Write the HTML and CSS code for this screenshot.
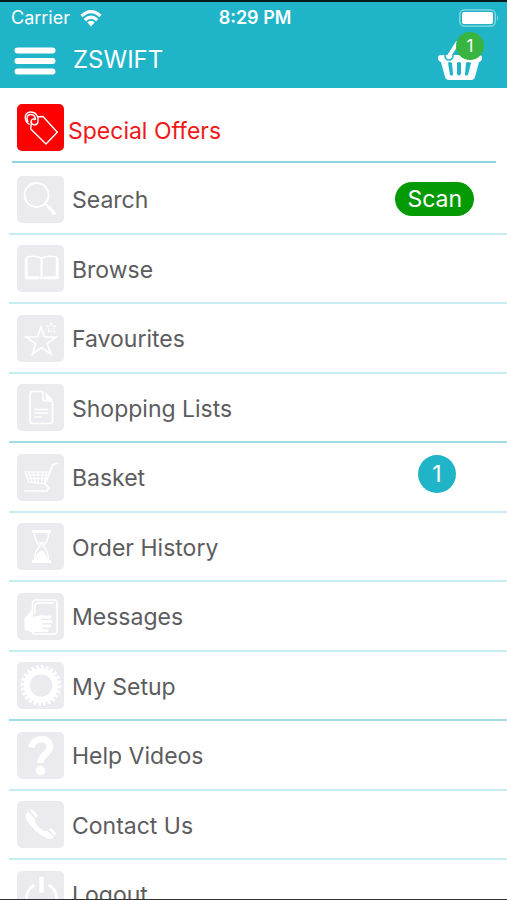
FILE: index.html
```html
<!DOCTYPE html>
<html lang="en">
<head>
<meta charset="utf-8">
<meta name="viewport" content="width=device-width, initial-scale=1">
<title>ZSWIFT</title>
<link rel="stylesheet" href="styles.css">
</head>
<body>
<div class="app">
  <header class="header">
    <div class="status">
      <div class="carrier">
        <span>Carrier</span>
        <svg width="22" height="17" viewBox="0 0 22 17" fill="none" stroke="#fff" stroke-width="3.200"><path d="M1.500 6Q11-2.800 20.500 6M4.800 10Q11 4.500 17.200 10"/><path d="M7.200 12.300Q11 9 14.800 12.300L11 16.500Z" fill="#fff" stroke="none"/></svg>
      </div>
      <span class="time">8:29 PM</span>
      <svg class="battery" width="40" height="18" viewBox="0 0 40 18"><rect x=".8" y=".8" width="35.500" height="16.400" rx="4.500" fill="none" stroke="#8fdbe5" stroke-width="1.300"/><rect x="3" y="3" width="31" height="12" rx="2" fill="#fff"/><path d="M38 6q2 3 0 6z" fill="#8fdbe5"/></svg>
    </div>
    <div class="bar">
      <button class="plain" type="button" aria-label="Menu">
        <svg width="42" height="28" viewBox="0 0 42 28" stroke="#fff" stroke-width="6" stroke-linecap="round"><path d="M3.500 3.500h35M3.500 14h35M3.500 24.500h35"/></svg>
      </button>
      <h1 class="title">ZSWIFT</h1>
      <button class="plain basket" type="button" aria-label="Basket">
        <svg width="46" height="40" viewBox="0 0 46 40"><path d="M12 15L21 1" stroke="#fff" stroke-width="4" stroke-linecap="round"/><path fill="#fff" fill-rule="evenodd" d="M4 14H42Q45 14 45 17T42 21L38 36Q37 39 34 39H12Q9 39 8 36L4 21Q1 20 1 17T4 14ZM11 22L13 34Q16 36 16 33L15 22Q13 20 11 22ZM20 22V33Q22 36 24 33V22Q22 20 20 22ZM29 22L28 33Q28 36 31 34L34 22Q31 20 29 22Z"/><path d="M8 14Q8 19 12 19T16 14" fill="#fff" stroke="#20b4c8" stroke-width="1.500"/></svg>
        <span class="count">1</span>
      </button>
    </div>
  </header>

  <nav class="menu">
    <a class="offers" href="#offers">
      <svg class="icon" viewBox="0 0 47 47" fill="none" stroke="#fff" stroke-width="1.400" stroke-linejoin="round"><path d="M20 13L26 12.500L40.300 28.300L29 40L13.700 25L14.500 17.500"/><path d="M12.500 20.500C7 17 6.500 9 13 8C19 7.500 22 13 21 18C20 22 14.500 21.500 14 18C14 15 17 14 18.500 16M11 18C9 14 10 10.500 13.500 10.500C17 10.500 18.500 13 18.500 16"/></svg>
      <span>Special Offers</span>
    </a>
    <div class="row">
      <a class="link" href="#search">
        <svg class="icon" viewBox="0 0 47 47" fill="none" stroke="#fff"><circle cx="19.500" cy="19" r="12" stroke-width="1.800"/><path d="M28 28L31 30" stroke-width="2"/><path d="M31 30L38 38.500" stroke-width="3.500"/></svg>
        <span>Search</span>
      </a>
      <button class="scan" type="button">Scan</button>
    </div>
    <div class="row">
      <a class="link" href="#browse">
        <svg class="icon" viewBox="0 0 47 47" fill="none" stroke="#fff" stroke-width="1.400" stroke-linejoin="round"><path d="M24.500 13Q18 10 10 12V32H22Q24.500 35 27 32H39.500V12Q31 10 24.500 13ZM8.500 13V33.500H22M41 13V33.500H27"/><path d="M24.500 13V34" stroke-width="2"/></svg>
        <span>Browse</span>
      </a>
    </div>
    <div class="row">
      <a class="link" href="#favourites">
        <svg class="icon" viewBox="0 0 47 47" fill="none" stroke="#fff" stroke-width="1.700"><path d="M24 12L27.500 22H39L30 28.500L34 39L24.500 32.500L15.500 39L18.500 28.500L9 22H20.500Z"/><path stroke-width="1" d="M34 7.500L35.500 11L39 11L36.500 13.500L38 17.500L34 15.500L31 17.500L32 13.500L29.500 11L33 11Z"/></svg>
        <span>Favourites</span>
      </a>
    </div>
    <div class="row">
      <a class="link" href="#lists">
        <svg class="icon" viewBox="0 0 47 47" fill="none" stroke="#fff" stroke-width="1.700" stroke-linejoin="round"><path d="M26 7.500H16Q13 7.500 13 10.500V36.500Q13 39.500 16 39.500H32.500Q35.500 39.500 35.500 36.500V17M17 25.500H31.500M17 29H31.500M17 33H25"/><path d="M26 7.500V14Q26 17 29 17H35.500"/><path fill="#fff" stroke="none" d="M28.500 8L36 16H30Q28.500 16 28.500 14Z"/></svg>
        <span>Shopping Lists</span>
      </a>
    </div>
    <div class="row">
      <a class="link" href="#basket">
        <svg class="icon" viewBox="0 0 47 47" fill="none" stroke="#fff" stroke-width="1.700" stroke-linecap="round"><path d="M40 9.500L36 10.500L28 29.500L32 34L30 37H8"/><path stroke-width="1.200" d="M33 18H8L12 28L28 30M9 21H32M10 24.500H31M12 18L15 28M16.500 18L18 28M21 18V28.500M25.500 18L24.500 29M29.500 18L27.500 29"/></svg>
        <span>Basket</span>
      </a>
      <span class="badge">1</span>
    </div>
    <div class="row">
      <a class="link" href="#history">
        <svg class="icon" viewBox="0 0 47 47" fill="none" stroke="#fff"><path stroke-width="2.800" d="M15 8.500H34M15 38.500H34"/><path stroke-width="1.300" d="M17.500 10Q17.500 18 23 23Q17.500 28 17.500 37M31.500 10Q31.500 18 26 23Q31.500 28 31.500 37"/><path fill="#fff" stroke="none" d="M18 37Q19 31 24.500 27Q30 31 31 37ZM22 19H27L24.500 23Z"/></svg>
        <span>Order History</span>
      </a>
    </div>
    <div class="row">
      <a class="link" href="#messages">
        <svg class="icon" viewBox="0 0 47 47" fill="none" stroke="#fff" stroke-linecap="round"><path stroke-width="1.600" d="M15.500 22V10Q15.500 7 18.500 7H37Q40 7 40 10V38Q40 41 37 41H18Q15.500 41 15.500 39M18 20V12Q18 10 20 10H36"/><path fill="#fff" stroke="none" d="M16 17V24L25 22V39H14L7.500 37V25Q12 21 14.500 17Z"/><path stroke-width="3" d="M23 24H33M23 28.500H34M23 33H33M23 37.500H30"/></svg>
        <span>Messages</span>
      </a>
    </div>
    <div class="row">
      <a class="link" href="#setup">
        <svg class="icon" viewBox="0 0 47 47" fill="none" stroke="#fff"><circle cx="24" cy="23.500" r="14.200" stroke-width="6"/><circle cx="24" cy="23.500" r="18.400" stroke-width="4" pathLength="96" stroke-dasharray="2.300 1.700"/></svg>
        <span>My Setup</span>
      </a>
    </div>
    <div class="row">
      <a class="link" href="#help">
        <svg class="icon" viewBox="0 0 47 47" fill="none" stroke="#fff"><path stroke-width="6.500" d="M14.500 15.500C16 4.500 33 5 33 14.500C33 22 23.500 22 23.500 31"/><circle cx="23.500" cy="38.500" r="4.800" fill="#fff" stroke="none"/></svg>
        <span>Help Videos</span>
      </a>
    </div>
    <div class="row">
      <a class="link" href="#contact">
        <svg class="icon" viewBox="0 0 47 47" fill="#fff"><path d="M9 13Q8 18 13 24Q21 34 32 38Q35 39 37 36L30 29.500Q28 31 25 29Q20 25 18 21Q17 19 18 18L11 10.500ZM12.500 9L15 8L21 14.500L19.500 17ZM32 28.500L34 27L39 32L38 35Z"/></svg>
        <span>Contact Us</span>
      </a>
    </div>
    <div class="row">
      <a class="link" href="#logout">
        <svg class="icon" viewBox="0 0 47 47" fill="none" stroke="#fff" stroke-width="3"><path d="M17.500 14A15 15 0 1 0 31.500 14"/><path stroke-width="4.500" d="M24.500 6V22"/></svg>
        <span>Logout</span>
      </a>
    </div>
  </nav>
</div>
</body>
</html>
```
FILE: styles.css
```css
* {
  box-sizing: border-box;
}

body {
  margin: 0;
  background: #fff;
  color: #5c5c5e;
  font-family: Inter, "Liberation Sans", sans-serif;
  font-size: 23px;
  line-height: 28px;
}

button {
  border: 0;
  padding: 0;
  font: inherit;
  color: inherit;
  cursor: pointer;
}

a {
  color: inherit;
  text-decoration: none;
}

svg {
  display: block;
  flex: none;
}

.app {
  display: flex;
  flex-direction: column;
  height: 100vh;
  border-bottom: 1px solid #303030;
}

.header {
  flex: none;
  background: #20b4c8;
  border-top: 2px solid #06191c;
  color: #fff;
}

.status {
  display: grid;
  grid-template-columns: 1fr auto 1fr;
  align-items: center;
  height: 32px;
  padding: 0 8px 0 11px;
  font-size: 18px;
  line-height: 22px;
}

.carrier {
  display: flex;
  align-items: center;
  gap: 10px;
}

.time {
  font-weight: 600;
}

.battery {
  justify-self: end;
}

.bar {
  display: flex;
  align-items: center;
  height: 54px;
  padding: 0 24px 0 14px;
}

.plain {
  background: none;
}

.title {
  flex: 1;
  margin: 0 0 2px 17px;
  font-size: 24px;
  font-weight: 400;
}

.basket {
  position: relative;
}

.count {
  position: absolute;
  top: -9px;
  right: -1px;
  width: 28px;
  border-radius: 50%;
  background: #38b440;
  font-size: 17px;
}

.menu {
  flex: 1;
  min-height: 0;
  overflow-y: auto;
  scrollbar-width: none;
}

.offers {
  display: flex;
  align-items: center;
  gap: 4px;
  height: 75px;
  margin: 0 11px 2px 12px;
  padding: 6px 0 0 5px;
  border-bottom: 2px solid #8ed5de;
  color: #f01818;
}

.offers span {
  padding-top: 6px;
}

.row {
  display: flex;
  align-items: center;
  height: 70px;
  margin-left: 9px;
  border-bottom: 2px solid #c8edf2;
}

.row:nth-child(odd) {
  height: 69px;
}

.row:nth-child(4n + 1) {
  border-bottom-color: #a0dce4;
}

.link {
  display: flex;
  flex: 1;
  align-items: center;
  gap: 8px;
  padding-left: 8px;
}

.link span {
  padding-top: 2px;
}

.icon {
  width: 47px;
  height: 47px;
  border-radius: 5px;
  background: #ebebef;
}

.offers .icon {
  background: #f00;
}

.scan {
  height: 34px;
  margin-right: 33px;
  padding: 0 12px;
  border-radius: 17px;
  background: #049a04;
  color: #fff;
}

.badge {
  width: 38px;
  margin: 0 51px 6px 0;
  border-radius: 50%;
  background: #20b4c8;
  color: #fff;
  line-height: 38px;
  text-align: center;
}
```
